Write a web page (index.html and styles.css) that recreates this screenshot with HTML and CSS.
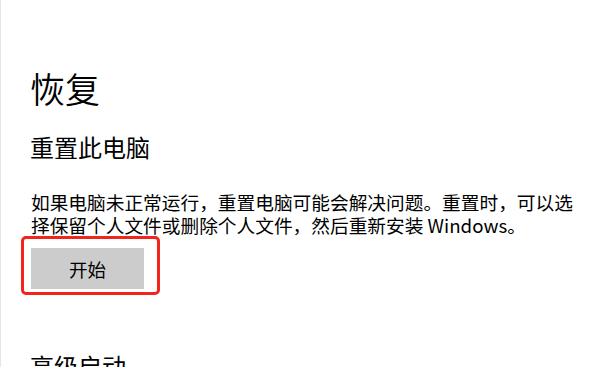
FILE: index.html
```html
<!DOCTYPE html>
<html lang="zh-CN">
<head>
<meta charset="utf-8">
<title>恢复</title>
<link rel="stylesheet" href="styles.css">
</head>
<body>
<main class="page">
  <h1 class="title">恢复</h1>
  <h2 class="section-title">重置此电脑</h2>
  <p class="desc">如果电脑未正常运行，重置电脑可能会解决问题。重置时，可以选择保留个人文件或删除个人文件，然后重新安装 Windows。</p>
  <div class="btn-wrap">
    <button class="btn">开始</button>
  </div>
  <h2 class="section-title next">高级启动</h2>
</main>
</body>
</html>
```

FILE: styles.css
```css
html, body {
  margin: 0;
  padding: 0;
  height: 100%;
  background: #ffffff;
  overflow: hidden;
}
body {
  border-left: 1px solid #e4e4e4;
  box-sizing: border-box;
  font-family: "Noto Sans CJK SC", "Noto Sans", sans-serif;
  color: #000000;
}
.page {
  padding: 70px 0 0 29px;
}
.title {
  margin: 0;
  font-size: 35px;
  line-height: 35px;
  font-weight: 350;
}
.section-title {
  margin: 30px 0 0 0;
  font-size: 24px;
  line-height: 24px;
  font-weight: 400;
}
.desc {
  margin: 31px 0 0 1px;
  width: 556px;
  font-size: 18.7px;
  line-height: 23px;
}
.btn-wrap {
  position: relative;
  margin: 12px 0 0 1px;
  width: 113px;
}
.btn-wrap::after {
  content: "";
  position: absolute;
  left: -10px;
  top: -12px;
  right: -16px;
  bottom: -6px;
  border: 3px solid #f2241c;
  border-radius: 5px;
}
.btn {
  display: block;
  width: 113px;
  height: 41px;
  padding: 0;
  border: none;
  background: #cccccc;
  font-family: inherit;
  font-size: 18.5px;
  color: #000000;
}
.section-title.next {
  margin-top: 65px;
}
```
